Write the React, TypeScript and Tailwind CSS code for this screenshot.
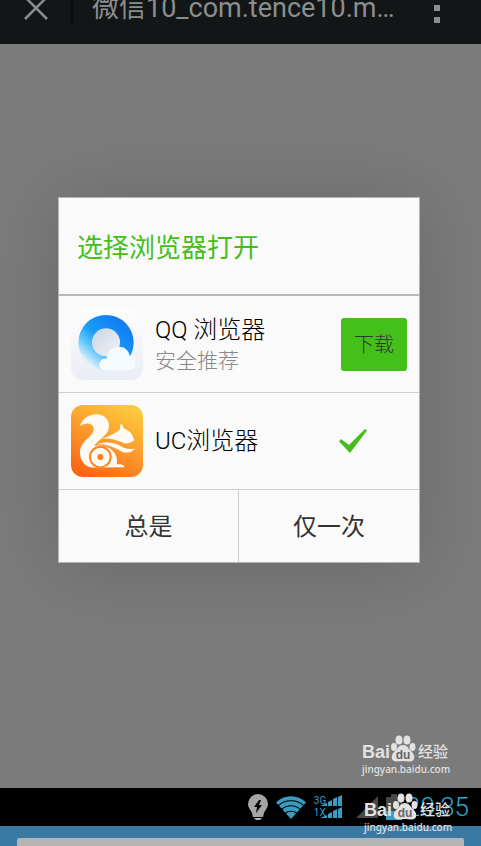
import React from "react";

function QQBrowserIcon() {
  return (
    <svg viewBox="0 0 216 216" className="size-18 shrink-0" aria-hidden="true">
      <defs>
        <linearGradient id="qqTile" x1="0" y1="0" x2="0" y2="1">
          <stop offset="0" stopColor="#fdfdfe" />
          <stop offset="1" stopColor="#eaedf5" />
        </linearGradient>
        <linearGradient id="qqRing" x1="0.85" y1="0.25" x2="0.25" y2="0.95">
          <stop offset="0" stopColor="#137ff3" />
          <stop offset="0.45" stopColor="#1a9cf8" />
          <stop offset="0.7" stopColor="#5cc4fb" />
          <stop offset="1" stopColor="#e6f5fe" />
        </linearGradient>
        <linearGradient id="qqHole" x1="0" y1="0" x2="1" y2="1">
          <stop offset="0" stopColor="#ccd4e2" />
          <stop offset="1" stopColor="#f2f2f5" />
        </linearGradient>
      </defs>
      <rect width="216" height="216" rx="36" fill="url(#qqTile)" />
      <circle cx="105" cy="104" r="83" fill="url(#qqRing)" />
      <circle cx="105" cy="103" r="42" fill="url(#qqHole)" />
      <path
        d="M104 187c-16 0-22-13-18-23 3-9 12-13 21-12 3-22 16-36 36-36 17 0 30 10 33 27 8 0 13 3 14 10 9 14 2 34-15 34z"
        fill="#f6fbff"
      />
    </svg>
  );
}

function UCBrowserIcon() {
  return (
    <svg viewBox="0 0 216 216" className="size-18 shrink-0" aria-hidden="true">
      <defs>
        <linearGradient id="ucTile" x1="0.75" y1="0" x2="0.25" y2="1">
          <stop offset="0" stopColor="#fdc93c" />
          <stop offset="0.5" stopColor="#fb9a2c" />
          <stop offset="1" stopColor="#fb6415" />
        </linearGradient>
      </defs>
      <rect width="216" height="216" rx="36" fill="url(#ucTile)" />
      <g fill="#fffaf2">
        <path d="M27 63C34 40 56 27 79 28c21 1 36 17 35 37-1 25-30 37-44 56-14 18-19 45-8 66-22-3-36-22-35-46 1-35 39-43 41-68C69 55 46 49 27 63z" />
        <path d="M84 101c22-1 40-11 60-25 4-3 4-5 3-9 0-4 1-8 4-11 4 5 7 10 8 15 15 4 26 15 29 30 2 4 1 6-3 8-7 5-15 7-24 6-23-11-48-17-77-14z" />
        <path d="M76 117c30-9 58-5 82 11 11 4 22 5 34 3-10 11-24 14-38 10-23-14-46-24-78-24z" />
        <path d="M50 128c36-17 84-2 88 37 1 6-1 10-1 14l-10 8H60c-18-16-25-41-10-59z" />
      </g>
      <circle cx="88" cy="156" r="31" fill="none" stroke="#fb8425" strokeWidth="6" />
      <circle cx="88" cy="156" r="14" fill="none" stroke="#fffaf2" strokeWidth="10" />
      <circle cx="88" cy="156" r="9" fill="#fb7e23" />
      <path d="M58 187h103c-2-5-7-8-13-9h-30c-14 12-44 12-60 2z" fill="#fffaf2" />
    </svg>
  );
}

function Bulb() {
  return (
    <svg viewBox="0 0 20 27" className="h-[27px] w-5 shrink-0" aria-hidden="true">
      <path d="M10 0a10 10 0 0 1 10 10c0 4-3 6-4 9l-1 4H5l-1-4c-1-3-4-5-4-9A10 10 0 0 1 10 0z" fill="#a5a5a5" />
      <path d="M6 24h8l-2 2H8z" fill="#b5b5b5" />
      <path d="M11 6 6 13h3l-1 6 6-8h-3l2-5z" fill="#000" />
    </svg>
  );
}

function Wifi() {
  return (
    <svg viewBox="0 0 30 23" className="h-[23px] w-[30px] shrink-0" aria-hidden="true">
      <path d="M15 23 0 6.500C8-2 22-2 30 6.500z" fill="#3a9cc3" />
      <path
        d="M2 10c7-7 19-7 26 0M5.500 13.500c5-5 14-5 19 0M9 17.500c3-3 9-3 12 0"
        fill="none"
        stroke="#000"
        strokeWidth="1.200"
      />
    </svg>
  );
}

function SignalBars() {
  return (
    <svg viewBox="0 0 22 11" className="h-[11px] w-[22px]" aria-hidden="true">
      <path d="M0 11 7 8v3zM8 11V7l4-2v6zM13 11V4l4-2v9zM18 11V2l4-2v11z" fill="#3a9cc3" />
    </svg>
  );
}

function Watermark({ place }: { place: string }) {
  return (
    <div className={`absolute h-[42px] w-[90px] text-[#e2e2e2] ${place}`}>
      <div className="flex h-[27px] items-end leading-5">
        <span className="text-lg leading-5 font-bold font-['Liberation_Sans',sans-serif]">Bai</span>
        <svg viewBox="0 0 26 27" className="h-[27px] w-[26px]" aria-hidden="true">
          <g fill="#e2e2e2">
            <ellipse cx="4" cy="12" rx="3" ry="4" />
            <ellipse cx="9" cy="5" rx="3.500" ry="4.500" />
            <ellipse cx="17" cy="5" rx="3.500" ry="4.500" />
            <ellipse cx="22.500" cy="12" rx="3" ry="4" />
            <path d="M13 10c4 0 5 3 7 5 3 3 5 5 4 9-2 4-7 2-11 2s-9 2-11-2c-1-4 1-6 4-9 2-2 3-5 7-5z" />
          </g>
          <text x="13" y="24" textAnchor="middle" fontSize="12" fontWeight="700" fontFamily="Liberation Sans, sans-serif" fill="#666">
            du
          </text>
        </svg>
        <span className="ml-0.5 text-[15px] leading-5 font-medium">经验</span>
      </div>
      <div className="text-[10px] leading-[14px] font-medium font-['Noto_Sans',sans-serif]">jingyan.baidu.com</div>
    </div>
  );
}

export default function App() {
  return (
    <div className="relative flex min-h-screen flex-col overflow-hidden bg-[#7b7b7b] font-[Roboto,'Noto_Sans_CJK_SC',sans-serif] text-[#333]">
      <header className="flex h-11 items-end overflow-hidden bg-[#121617] text-[#8b8e8f]">
        <div className="flex h-18 w-full shrink-0 items-center">
          <button aria-label="关闭" className="flex w-[71px] justify-center">
            <svg viewBox="0 0 24 24" className="size-6" aria-hidden="true">
              <path d="M1 1l22 22M23 1 1 23" stroke="currentColor" strokeWidth="2.500" fill="none" />
            </svg>
          </button>
          <div className="h-9 w-0.5 bg-[#090c0d]" />
          <h1 className="ml-[19px] flex-1 truncate text-[27px] leading-9">微信10_com.tence10.m…</h1>
          <button aria-label="更多" className="mr-[41px] flex flex-col gap-1.5">
            <span className="size-1.5 bg-current" />
            <span className="size-1.5 bg-current" />
            <span className="size-1.5 bg-current" />
          </button>
        </div>
      </header>

      <main className="flex-1 pt-[153px] pr-[61px] pl-[58px]">
        <section
          role="dialog"
          aria-labelledby="dialog-title"
          className="border border-[#b4b4b4] bg-[#fafafa] shadow-[0_4px_70px_rgba(0,0,0,0.15)]"
        >
          <h2
            id="dialog-title"
            className="flex h-[98px] items-center border-b-2 border-[#b8b8b8] px-[18px] pt-1 text-[26px] text-[#45be1c]"
          >
            选择浏览器打开
          </h2>
          <div className="flex h-[97px] items-center border-b border-[#cfcfcf] px-3">
            <QQBrowserIcon />
            <div className="ml-3 flex-1 pt-0.5 font-light">
              <div className="text-2xl leading-8 text-black">QQ 浏览器</div>
              <div className="text-[21px] leading-[30px] text-[#888]">安全推荐</div>
            </div>
            <button className="h-[53px] w-[66px] rounded-[3px] bg-[#45c01a] pt-0.5 text-xl font-light">下载</button>
          </div>
          <div className="flex h-[97px] items-center border-b border-[#cfcfcf] px-3">
            <UCBrowserIcon />
            <div className="ml-3 flex-1 text-2xl leading-8 font-light text-black">UC浏览器</div>
            <svg viewBox="0 0 28 24" className="mr-10 h-6 w-7 shrink-0" aria-hidden="true">
              <path d="M0 12.500 2 10l8 6L26 0l2 1.500L11 24z" fill="#45be1c" />
            </svg>
          </div>
          <div className="grid h-[72px] grid-cols-2 text-2xl">
            <button className="border-r border-[#cfcfcf] pt-0.5">总是</button>
            <button className="pt-0.5">仅一次</button>
          </div>
        </section>
      </main>

      <div className="flex h-[38px] items-center justify-end bg-black pr-3">
        <Bulb />
        <div className="ml-2">
          <Wifi />
        </div>
        <div className="ml-2 flex flex-col text-[10px] leading-3 text-[#3a9cc3]">
          <div className="flex">
            <span className="w-1.5 whitespace-nowrap">3G</span>
            <SignalBars />
          </div>
          <div className="flex">
            <span className="w-1.5 whitespace-nowrap">1X</span>
            <SignalBars />
          </div>
        </div>
        <svg viewBox="0 0 22 22" className="ml-3.5 size-[22px]" aria-hidden="true">
          <path d="M0 22 22 0v22z" fill="#484848" />
        </svg>
        <svg viewBox="0 0 16 26" className="ml-2 h-[26px] w-4" aria-hidden="true">
          <path d="M5 0h6v3h5v23H0V3h5z" fill="#484848" />
          <path d="M0 17h16v9H0z" fill="#3a9cc3" />
        </svg>
        <time className="ml-1 text-[26px] leading-8 font-light text-[#33a5d0]">20:35</time>
      </div>
      <div className="h-5 bg-[#3a79a4] px-[17px] pt-3">
        <div className="h-2 rounded-t-xs bg-[#b4b4b4]" />
      </div>

      <Watermark place="bottom-[69px] right-[29px]" />
      <Watermark place="bottom-[11px] right-[27px]" />
    </div>
  );
}
